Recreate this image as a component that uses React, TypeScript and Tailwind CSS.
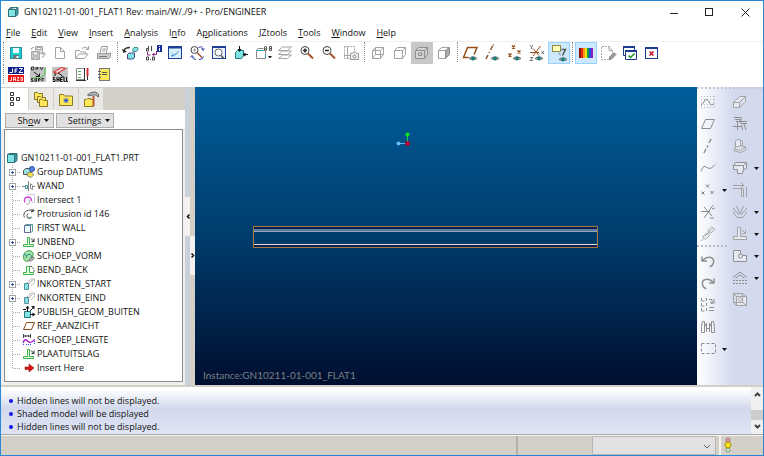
import type { ReactNode } from "react"

const GREY = "#a3a3a3"
const CYAN = "#7fe3e3"

type IconProps = { children: ReactNode; size?: number; stroke?: string }

function Icon({ children, size = 22, stroke = GREY }: IconProps) {
  return (
    <svg
      width={size}
      height={size}
      viewBox={`0 0 ${size} ${size}`}
      fill="none"
      stroke={stroke}
      strokeWidth="1"
      className="shrink-0"
      aria-hidden="true"
    >
      {children}
    </svg>
  )
}

function Eye() {
  return (
    <g>
      <path d="M9 16.500q4-3.500 8 0q-4 3-8 0z" fill="#d8e4e4" stroke="#666" />
      <circle cx="13" cy="16.500" r="1.800" fill="#0a7f7f" stroke="none" />
    </g>
  )
}

function Caret() {
  return (
    <svg width="5" height="3" viewBox="0 0 5 3" className="shrink-0" aria-hidden="true">
      <path d="M0 0h5L2.500 3z" fill="#111" />
    </svg>
  )
}

type Tool = { name: string; icon: ReactNode; active?: boolean; pressed?: boolean; menu?: boolean }

const fileTools: Tool[] = [
  {
    name: "Save",
    icon: (
      <Icon>
        <rect x="5.500" y="5.500" width="11" height="11" fill="#10d0d8" stroke="#2b8f98" />
        <path d="M8 6h6v5H8z" fill="#f4ffff" stroke="none" />
        <path d="M8 13h6v3.500H8z" fill="#777" stroke="none" />
        <path d="M11.500 14h2v2h-2z" fill="#fff" stroke="none" />
      </Icon>
    ),
  },
  {
    name: "Save a copy",
    icon: (
      <Icon stroke="#a8a8a8">
        <path d="M8.500 4.500h7v7h-7z" fill="#ddd" />
        <path d="M10 5.500h4v2h-4z" fill="#fff" />
        <path d="M4.500 9.500h8v8h-8z" fill="#c8c8c8" />
        <path d="M6.500 10v3h4v-3zM6.500 17v-2h4v2z" fill="#fff" />
        <path d="M15 15.500q3-1 2-4M15.500 12.500l1.500-2 1.500 2M4 7.500q0-2 3-2" stroke="#999" />
      </Icon>
    ),
  },
  {
    name: "New",
    icon: (
      <Icon>
        <path d="M6.500 5.500h5l4 4v7h-9zM11.500 5.500v4h4" fill="#fff" />
      </Icon>
    ),
  },
  {
    name: "Open",
    icon: (
      <Icon>
        <path d="M4.500 16.500v-8h4l1 1.500h5v2M4.500 16.500l3.500-4.500h9l-3.500 4.500zM11 6.500q3-3 6 0M17.500 4v3.500h-3" />
      </Icon>
    ),
  },
  {
    name: "Print",
    icon: (
      <Icon stroke="#999">
        <path d="M7 11l1.500-6.500h6L13.500 11M9.500 7h3.500M9 9h3.500" />
        <path d="M4.500 11.500h12l1-1v4l-1.500 2H4.500z" fill="#ccc" />
        <path d="M6 14.500h8" stroke="#777" />
      </Icon>
    ),
  },
]

const viewTools: Tool[] = [
  {
    name: "Regenerate",
    icon: (
      <Icon stroke="#333">
        <path d="M7.500 12.500l1.500-1.500h5.500v4.500l-1.500 1.500h-5.500z" fill={CYAN} stroke="#448" />
        <path d="M12.500 7.500l1.500-2h3.500l.5 2-1.500 2h-3.500z" fill={CYAN} stroke="#4a8a8a" />
        <path d="M4 8.500q1-3 6-3" strokeWidth="1.500" />
        <path d="M2 7l5 2.500-3.500 1.500z" fill="#222" stroke="none" />
      </Icon>
    ),
  },
  {
    name: "Switch dimensions",
    icon: (
      <Icon stroke="#444">
        <path d="M6.500 4v5M4.500 6.500h2v2.500h-2zM9.500 4v5" />
        <path d="M5.500 10v3h3M14.500 9v3.500h-4M12.500 11l-2 1.500 2 1.500" stroke="#a02090" />
        <path d="M4.500 15h2v3h-2zM10.500 15h2v3h-2z" />
        <path d="M8 17.500h1" />
        <rect x="15" y="3" width="5" height="7" fill="#12309c" stroke="none" />
        <path d="M17.500 4v1M17.500 6v3" stroke="#fff" />
      </Icon>
    ),
  },
  {
    name: "Repaint",
    icon: (
      <Icon>
        <rect x="4.500" y="4.500" width="13" height="12" fill="#d8efff" stroke="#1d3f94" />
        <path d="M4 5.500h14" stroke="#1d3f94" strokeWidth="2" />
        <path d="M8 15q5-2 8-7l-5 4-4 1z" fill="#4c9ed8" stroke="none" />
        <path d="M7 10l4 4" stroke="#9ecbe8" />
      </Icon>
    ),
  },
  {
    name: "Spin center",
    icon: (
      <Icon stroke="#444">
        <circle cx="8.500" cy="8" r="3.500" fill="#fff" />
        <path d="M8.500 6.500v3M7 8h3" stroke="#999" />
        <path d="M11 10.500l5 5" stroke="#a4532a" strokeWidth="1.500" />
        <path d="M12.500 5.500q4-2 4.500 2M10 17.500q-3 0-4-3M15.500 6.500l1.500 2 1.500-2" stroke="#2b3c9c" />
        <path d="M4.500 15.500l1.500-2 2 2M13 17.500q4 0 4.500-3" stroke="#2b3c9c" />
      </Icon>
    ),
  },
  {
    name: "Preview",
    icon: (
      <Icon>
        <rect x="4.500" y="4.500" width="13" height="12" fill="#eef2fb" stroke="#1d3f94" />
        <path d="M4 5h14" stroke="#1d3f94" strokeWidth="2" />
        <circle cx="10.500" cy="10.500" r="3.500" fill="#fff" stroke="#666" />
        <path d="M13 13.500l3 3" stroke="#555" strokeWidth="1.500" />
      </Icon>
    ),
  },
  {
    name: "Orient mode",
    icon: (
      <Icon stroke="#277">
        <path d="M5.500 10.500l2-2h6v5.500l-2 2.500h-6z" fill={CYAN} />
        <path d="M9.500 4v4M18 12.500h-5" stroke="#111" />
        <path d="M7.500 7h4l-2 3zM15.500 10.500v4l-3-2z" fill="#111" stroke="none" />
      </Icon>
    ),
  },
  {
    name: "Saved views",
    icon: (
      <Icon stroke="#888">
        <path d="M4.500 8.500h9v8h-9zM4.500 8.500l2-2h5" fill="#fff" />
        <path d="M4.500 8.500h7M13.500 12v4" stroke="#1bb0b8" />
        <path d="M12.500 8.500V5l1-1 1 1v3.500M12.500 7h2M17.500 8.500V4.500h2v4zM17.500 6.500h2" stroke="#555" />
        <path d="M16 14h4l-2 2.500z" fill="#111" stroke="none" />
      </Icon>
    ),
  },
  {
    name: "Layers",
    icon: (
      <Icon>
        <path d="M4.500 16.500l4-3.500h9l-4 3.500z" fill="#fff" />
        <path d="M4.500 12.500l4-3.500h9l-4 3.500z" fill="#fff" />
        <path d="M4.500 8.500l4-3.500h9l-4 3.500z" fill="#fff" />
      </Icon>
    ),
  },
  {
    name: "Zoom in",
    icon: (
      <Icon stroke="#444">
        <circle cx="9" cy="8.500" r="4" fill="#fff" />
        <path d="M9 6.500v4M7 8.500h4" stroke="#222" strokeWidth="1.500" />
        <path d="M12 11.500l5 5" stroke="#a4532a" strokeWidth="2" />
      </Icon>
    ),
  },
  {
    name: "Zoom out",
    icon: (
      <Icon stroke="#444">
        <circle cx="9" cy="8.500" r="4" fill="#fff" />
        <path d="M7 8.500h4" stroke="#222" strokeWidth="1.500" />
        <path d="M12 11.500l5 5" stroke="#a4532a" strokeWidth="2" />
      </Icon>
    ),
  },
  {
    name: "Refit",
    icon: (
      <Icon>
        <path d="M4.500 4.500h10v12h-10z" fill="#fff" strokeDasharray="2 1" />
        <path d="M7.500 4.500v12M4 13.500h10" />
        <path d="M10.500 11.500h2l1-1.500h2l1 1.500h2v6h-8z" fill="#f2f2f2" stroke="#999" />
        <circle cx="14.500" cy="14.500" r="1.500" stroke="#888" />
      </Icon>
    ),
  },
]

const displayTools: Tool[] = [
  {
    name: "Wireframe",
    icon: (
      <Icon>
        <path d="M5.500 8.500h8v8h-8zM5.500 8.500l3-3h8l-3 3M16.500 5.500v7l-3 4M8.500 5.500v7h8M8.500 12.500l-3 4" />
      </Icon>
    ),
  },
  {
    name: "Hidden line",
    icon: (
      <Icon>
        <path d="M5.500 8.500h8v8h-8zM5.500 8.500l3-3h8l-3 3M16.500 5.500v7l-3 4" fill="#fff" />
      </Icon>
    ),
  },
  {
    name: "No hidden",
    pressed: true,
    icon: (
      <Icon stroke="#8e8e8e">
        <path d="M4.500 8.500h9v8h-9zM4.500 8.500l3-3h9l-3 3M16.500 5.500v7l-3 4" fill="#d4d4d4" />
        <path d="M7.500 13.500v-2.500h3.500v2.500z" />
      </Icon>
    ),
  },
  {
    name: "Shading",
    icon: (
      <Icon>
        <path d="M5.500 8.500h7v8h-7z" fill="#fff" />
        <path d="M5.500 8.500l3-3h8l-4 3z" fill="#fff" />
        <path d="M16.500 5.500v7l-4 4v-8z" fill="#aaa" stroke="#8e8e8e" />
      </Icon>
    ),
  },
]

const datumTools: Tool[] = [
  {
    name: "Datum planes",
    icon: (
      <Icon>
        <path d="M8.500 15.500H3.500l4-10h9.500l-3 7" stroke="#96501e" strokeWidth="1.500" />
        <Eye />
      </Icon>
    ),
  },
  {
    name: "Datum axes",
    icon: (
      <Icon>
        <path d="M4 17l2-4M7 11l.5-1M8.500 8l2-4M11 3.500l.5-1" stroke="#96501e" strokeWidth="1.500" />
        <Eye />
      </Icon>
    ),
  },
  {
    name: "Datum points",
    icon: (
      <Icon>
        <path d="M8 3.500l3 3m0-3l-3 3M4.500 11.500l3 3m0-3l-3 3M13.500 8.500l3 3m0-3l-3 3" stroke="#96501e" strokeWidth="1.500" />
        <Eye />
      </Icon>
    ),
  },
  {
    name: "Coordinate systems",
    icon: (
      <Icon stroke="#777">
        <path d="M4 3l1.500 2L7 3M5.500 5v2M4 15.500h3l-3 3h3M15.500 9l2.500 3m0-3l-2.500 3" />
        <path d="M4 10.500h9M14.500 4L7 14M7 6.500l6 7" stroke="#96501e" />
        <Eye />
      </Icon>
    ),
  },
  {
    name: "Annotations",
    active: true,
    icon: (
      <Icon>
        <rect x="4.500" y="3.500" width="8" height="6" fill="#ffffb8" stroke="#8f8a40" />
        <path d="M13.500 7.500h4l-3 6" stroke="#555" strokeWidth="1.500" />
        <path d="M10 11.500h2v2" stroke="#999" />
        <g transform="translate(2 1)">
          <Eye />
        </g>
      </Icon>
    ),
  },
]

const windowTools: Tool[] = [
  {
    name: "Colors",
    active: true,
    icon: (
      <Icon>
        <g stroke="none">
          <path d="M4 6h2v10H4z" fill="#8a1408" />
          <path d="M6 6h2v10H6z" fill="#e02a10" />
          <path d="M8 6h2v10H8z" fill="#f59a12" />
          <path d="M10 6h2v10h-2z" fill="#f2e51c" />
          <path d="M12 6h2v10h-2z" fill="#18a038" />
          <path d="M14 6h2v10h-2z" fill="#1c50e0" />
          <path d="M16 6h2v10h-2z" fill="#9020c0" />
        </g>
      </Icon>
    ),
  },
  {
    name: "Clear sketch",
    icon: (
      <Icon>
        <path d="M12 17.500H4.500v-13h8l3 4v3" fill="#fff" strokeDasharray="2 1" />
        <path d="M12 4.500v4h3.500" />
        <path d="M12.500 15l4.500-4.500 2 2-5 5h-1.500z" fill="#999" stroke="#8a8a8a" />
      </Icon>
    ),
  },
  {
    name: "Activate window",
    icon: (
      <Icon stroke="#1c3a90">
        <path d="M4.500 4.500h11v9h-11z" fill="#fff" />
        <path d="M4 5h12" strokeWidth="2" />
        <path d="M6.500 8.500h11v9h-11z" fill="#fff" />
        <path d="M6 9h12" strokeWidth="2" />
        <path d="M9.500 13.500l2 2 4-4" stroke="#189018" strokeWidth="1.500" />
      </Icon>
    ),
  },
  {
    name: "Close window",
    icon: (
      <Icon stroke="#1c3a90">
        <rect x="4.500" y="5.500" width="12" height="11" fill="#fff" />
        <path d="M4 6h13" strokeWidth="2" />
        <path d="M8.500 9.500l4 4m0-4l-4 4" stroke="#c01020" strokeWidth="1.500" />
      </Icon>
    ),
  },
]

const customTools: Tool[] = [
  {
    name: "Jazo",
    icon: (
      <Icon>
        <path d="M3 3h16v7H3z" fill="#12208c" stroke="none" />
        <path d="M3 11h16v7H3z" fill="#f01414" stroke="none" />
        <path d="M4.500 8.500h3V4.500M10 9V5h2.500M10 7h2M14 4.500h3.500l-3.500 4h4" stroke="#fff" />
        <path d="M4.500 16.500h2V13M8.500 17v-3.500h2V17M8.500 15.500h2M12 13.500h2l-2 3h2.500M16 13.500h1.500v3H16z" stroke="#ffd4d4" />
      </Icon>
    ),
  },
  {
    name: "Driven surface",
    icon: (
      <Icon stroke="#333">
        <path d="M3 3h16v15H3z" fill="#c4c4c4" stroke="none" />
        <path d="M4.500 3v3h2l.5-3zM9 6V3.500h2v1.500H9.500M13 3l1.500 3L16 3" />
        <path d="M7 8l5 4M12.500 9.500V12.500H9" stroke="#111" />
        <path d="M18 4v6l-4 4H6" stroke="#38c838" />
        <path d="M6 14.500H4.500v1.500H6v1.500H4M8 14v3.500h1.500V14M11.500 17.500v-3H13v1.500h-1M15 17.500v-3h2M15 16h1.500" />
      </Icon>
    ),
  },
  {
    name: "Shell",
    icon: (
      <Icon stroke="#333">
        <path d="M3 3h16v15H3z" fill="#c4c4c4" stroke="none" />
        <path d="M4.500 8l8-4.500 4 1-8 5z" fill="#ecc" stroke="#e02020" />
        <path d="M6 9v3M9 8.500l6 5" stroke="#111" />
        <path d="M6 13.500H4.500v2H6v2H4M8 13v4.500M10 13v4.500M8 15.500h2M13.500 13.500h-2v4h2M11.500 15.500h2M15 13v4.500h1.500M17.500 13v4.500H19" stroke="#111" />
      </Icon>
    ),
  },
  {
    name: "Notebook pen",
    icon: (
      <Icon stroke="#888">
        <path d="M5.500 4.500h8v11h-8z" fill="#fff" />
        <path d="M5 16.500h10M13.500 4v12" stroke="#333" />
        <path d="M7 7.500h3M7 10.500h3M7 13.500h3" stroke="#5fae5f" />
        <path d="M16.500 4v8" stroke="#d03030" strokeWidth="2" />
        <path d="M16.500 12v4" stroke="#333" />
      </Icon>
    ),
  },
  {
    name: "Catalog",
    icon: (
      <Icon stroke="#777">
        <rect x="6.500" y="4.500" width="10" height="12" fill="#f7e85a" />
        <path d="M9 8.500h5M9 10.500h5" stroke="#555" />
        <path d="M5 7.500h3M5 10.500h3M5 13.500h3" stroke="#666" />
      </Icon>
    ),
  },
]

const sketchTools: Tool[] = [
  {
    name: "Sketch",
    icon: (
      <Icon>
        <path d="M4 5.500h14M4 8.500h14M4 13.500h14M4 16.500h14M4.500 5v12M17.500 5v12" stroke="#bbb" strokeDasharray="1 2" />
        <path d="M4 13.500l2-1q2-5 4-4t3 4 4 0" stroke="#8c8c8c" />
      </Icon>
    ),
  },
  { name: "Plane", icon: <Icon stroke="#8c8c8c"><path d="M4.500 15.500l4-9h9l-4 9z" /></Icon> },
  { name: "Axis", icon: <Icon stroke="#8c8c8c"><path d="M7 18l2-4M10 12.500l1-2M12 8l2-4" strokeWidth="1.500" /></Icon> },
  { name: "Curve", icon: <Icon stroke="#8c8c8c"><path d="M4 14.500q2-6 4-5t4 2 6-4" /></Icon> },
  {
    name: "Point",
    menu: true,
    icon: (
      <Icon stroke="#808080">
        <path d="M9 5.500l3 3m0-3l-3 3M4.500 12.500l3 3m0-3l-3 3M13.500 12l3 3m0-3l-3 3" />
      </Icon>
    ),
  },
  { name: "Csys", icon: <Icon stroke="#8c8c8c"><path d="M4 10.500h9M16 4L7 17M7 6l8 9M15 8l3-1M13 17h4" /></Icon> },
  {
    name: "Reference",
    icon: (
      <Icon>
        <path d="M5.500 14l4-4 3 2-4 4.500zM10.500 8l4-4 3 2-4 4.500zM7.500 13.500l7-7M4 18l2.500-2.500" />
      </Icon>
    ),
  },
]

const editTools: Tool[] = [
  { name: "Undo", icon: <Icon stroke="#909090"><path d="M5 6.500v4.500h5M5.500 10.500q4-4 8-3t3 5-4 4" strokeWidth="1.500" /></Icon> },
  { name: "Redo", icon: <Icon stroke="#909090"><path d="M17 6.500v4.500h-5M16.500 10.500q-4-4-8-3t-3 5 4 4" strokeWidth="1.500" /></Icon> },
  {
    name: "Regenerate all",
    icon: (
      <Icon stroke="#909090">
        <path d="M4.500 4v3h3M4.500 9v3h3M4.500 14v3h3M9.500 4v3M9.500 9v3M9.500 14v3M12 5.500h3v4M13 8l2 2 2-2M18 9h-1V5M12 13.500h5M12 16.500h5" />
      </Icon>
    ),
  },
  {
    name: "Find",
    icon: (
      <Icon stroke="#909090">
        <path d="M4.500 16.500v-6l1-5h2v11zM14.500 16.500v-11h2l1 5v6zM7.500 11l2-4v9M14.500 11l-2-4v9M9.500 12.500h3" />
      </Icon>
    ),
  },
  {
    name: "Select box",
    menu: true,
    icon: <Icon stroke="#8c8c8c"><rect x="4.500" y="5.500" width="14" height="10" strokeDasharray="3 2" /></Icon>,
  },
]

const featureTools: Tool[] = [
  { name: "Extrude", icon: <Icon><path d="M4.500 11.500h6v5h-6zM4.500 11.500l6-6h6l-6 6M16.500 5.500v5l-6 6" fill="#e6e9f4" /></Icon> },
  {
    name: "Flat wall",
    icon: (
      <Icon stroke="#909090">
        <path d="M5 4.500h7v4h6M6 6.500h5l1 4h6M4 13.500h8M8.500 9v8M7 8.500h4M15 11l2 6M12.500 12l1 5" />
      </Icon>
    ),
  },
  {
    name: "Flange wall",
    icon: (
      <Icon>
        <path d="M6.500 12V6q2-3 5-1v6l5 1v3l-5 2.500-6-1.500v-2zM6.500 12l5-1M11.500 5l2 1v5M5.500 14l6 1.500 5-3.500" fill="#e6e9f4" />
      </Icon>
    ),
  },
  {
    name: "Unattached flat wall",
    menu: true,
    icon: <Icon stroke="#909090"><path d="M4.500 8.500l2-3h11v6l-3 1-1 4h-5v-4h-4zM4.500 8.500h10v4M14.500 8.500l3-3" fill="#e6e9f4" /></Icon>,
  },
  { name: "Extend", icon: <Icon><path d="M4 6.500h10M4 9.500h10M12 4l3 2.500-3 2.500M12.500 10v8M14.500 10v8M17.500 8v10" /></Icon> },
  {
    name: "Bend",
    menu: true,
    icon: <Icon stroke="#a0a0a0"><path d="M4 7l6 7M18 7l-6 7M7.500 5l3.500 8 3.500-8M4 11l4 5.500h6l4-5.500" /></Icon>,
  },
  {
    name: "Unbend",
    menu: true,
    icon: <Icon><path d="M4.500 13.500h4v-9h3v9h6v3h-13zM13 7l3 3M16.500 7v3.500H13" fill="#e6e9f4" /></Icon>,
  },
  {
    name: "Notch",
    menu: true,
    icon: (
      <Icon stroke="#909090">
        <path d="M4.500 5.500h7v5h6v6h-13z" fill="#e6e9f4" />
        <circle cx="11.500" cy="11" r="2" fill="#e6e9f4" />
      </Icon>
    ),
  },
  {
    name: "Form",
    menu: true,
    icon: (
      <Icon stroke="#909090">
        <path d="M4 10.500l7-5.500 7 5.500M6.500 11.500l4.500-3.500 4.500 3.500" />
        <path d="M4 13.500h14M4 16.500h14" strokeDasharray="2 1" />
      </Icon>
    ),
  },
  {
    name: "Flat pattern",
    icon: (
      <Icon>
        <path d="M7.500 7.500h10v9h-10z" fill="#e6e9f4" />
        <path d="M4.500 4.500h9v9h-9zM4.500 4.500l3 3M13.500 4.500l4 3M4.500 13.500l3 3M13.500 13.500l4 3M9 10.500l2-2 2 2-2 2z" />
      </Icon>
    ),
  },
]

function ToolButton({ tool }: { tool: Tool }) {
  const state = tool.active
    ? "bg-[#cce8ff] outline outline-1 -outline-offset-1 outline-[#99d1ff]"
    : tool.pressed
      ? "bg-[#c8c8c8]"
      : ""
  return (
    <button type="button" aria-label={tool.name} className={`h-[22px] w-[22px] shrink-0 ${state}`}>
      {tool.icon}
    </button>
  )
}

function Grip({ narrow = false }: { narrow?: boolean }) {
  return (
    <span className={`flex shrink-0 justify-center ${narrow ? "w-1" : "w-[5px]"}`}>
      <span className="h-5 border-l border-dotted border-[#888]"></span>
    </span>
  )
}

function ToolColumn({ tools }: { tools: Tool[] }) {
  return (
    <div className="flex flex-col">
      {tools.map((tool) => (
        <div key={tool.name} className="flex items-center gap-[3px]">
          <ToolButton tool={tool} />
          {tool.menu && <Caret />}
        </div>
      ))}
    </div>
  )
}

const menus = [
  ["", "F", "ile"],
  ["", "E", "dit"],
  ["", "V", "iew"],
  ["", "I", "nsert"],
  ["", "A", "nalysis"],
  ["I", "n", "fo"],
  ["A", "p", "plications"],
  ["JZtools", "", ""],
  ["", "T", "ools"],
  ["", "W", "indow"],
  ["", "H", "elp"],
]

const unbendIcon = (
  <Icon size={14} stroke="#3fae4c">
    <path d="M1.500 9.500h4v-7h2v7h4v2h-10z" fill="#e4fbe4" />
    <path d="M9 3.500l3 3M12 3.500v3H9.500" stroke="#333" />
  </Icon>
)

const cutIcon = (
  <Icon size={14} stroke="#999">
    <path d="M5 6l4-4h3.500v3.500L8.500 9" strokeDasharray="2 1" />
    <path d="M2.500 6.500h4v6h-4z" fill={CYAN} stroke="#5a8fa0" />
    <path d="M6.500 7l4-4" />
  </Icon>
)

const features: { label: string; expandable?: boolean; icon: ReactNode }[] = [
  {
    label: "Group DATUMS",
    expandable: true,
    icon: (
      <Icon size={14} stroke="#555">
        <path d="M1.500 5.500l2-2h5v4l-2 2h-5z" fill="#9adfe0" />
        <circle cx="10" cy="4" r="2.500" fill="#5a88e8" stroke="#2a489a" />
        <path d="M6 7.500h4l1.500 2.500-2.500 2.500-4-2z" fill="#f0e04a" stroke="#887" />
      </Icon>
    ),
  },
  {
    label: "WAND",
    expandable: true,
    icon: (
      <Icon size={14} stroke="#888">
        <path d="M0 7.500h3M6.500 2v10M8.500 4.500v5l2 1v-4zM11 7.500h2" />
        <path d="M3.500 6.500h2v3h-2z" stroke="#2a8f8f" />
      </Icon>
    ),
  },
  {
    label: "Intersect 1",
    icon: (
      <Icon size={14} stroke="#999">
        <path d="M5.500 1.500h7v8h-3" stroke="#cfc4e8" />
        <path d="M3 9.500q-2-4.500 2.500-5.500 4 0 4 4" stroke="#d24cd2" strokeWidth="1.500" />
        <path d="M4 11q4 1 4-3L6 6.500" stroke="#aaa" />
      </Icon>
    ),
  },
  {
    label: "Protrusion id 146",
    icon: (
      <Icon size={14} stroke="#555">
        <path d="M12 3q-7-.5-9.500 2.500-1.500 3 0 5M6 6.500q-2 2-.5 4.500l3 .5" />
        <path d="M12 3q-1 1.500-3 1.500" strokeWidth="2" />
        <path d="M7 11l3-1" stroke="#2a8f8f" />
      </Icon>
    ),
  },
  {
    label: "FIRST WALL",
    icon: (
      <Icon size={14} stroke="#669">
        <path d="M2.500 4.500h6v7h-6z" fill="#eaffff" />
        <path d="M2.500 4.500l1.500-1h6.500v7l-2 1M8.500 4.500l2-1" stroke="#5aa0a0" />
      </Icon>
    ),
  },
  { label: "UNBEND", expandable: true, icon: unbendIcon },
  {
    label: "SCHOEP_VORM",
    icon: (
      <Icon size={14} stroke="#3a9e48">
        <path d="M1.500 7.500q0-5 5.500-6 5 1 4 5l-2 4.500-4.500 1.500q-3.500-1-3-5z" fill="#a6e4ac" />
        <path d="M4 9q0-4 4-4 2 1 1 4M2 5l3 2" stroke="#2a8a80" />
        <path d="M7 10l5-2v2l-4 2.500z" fill="#bbb" stroke="#888" />
      </Icon>
    ),
  },
  {
    label: "BEND_BACK",
    icon: (
      <Icon size={14} stroke="#3fae4c">
        <path d="M1.500 9.500h3v-6h3v6h4v2h-10z" fill="#e4fbe4" />
        <path d="M8 3.500h2l2 3v3" stroke="#555" strokeDasharray="2 1" />
      </Icon>
    ),
  },
  { label: "INKORTEN_START", expandable: true, icon: cutIcon },
  { label: "INKORTEN_EIND", expandable: true, icon: cutIcon },
  {
    label: "PUBLISH_GEOM_BUITEN",
    icon: (
      <Icon size={14} stroke="#111">
        <path d="M2.500 6.500h6v6h-6z" fill={CYAN} stroke="#277" />
        <path d="M5.500 7V2M8 6l3.500-3.500M8 9.500h4M1 4.500h3" />
        <path d="M3.500 3.500l2-3 2 3zM9 1h3.500v3.500zM10.500 7.500l3 2-3 2z" fill="#111" stroke="none" />
      </Icon>
    ),
  },
  {
    label: "REF_AANZICHT",
    icon: (
      <Icon size={14} stroke="#8f4a1c">
        <path d="M1.500 10.500l3-7h8l-3 7z" />
      </Icon>
    ),
  },
  {
    label: "SCHOEP_LENGTE",
    icon: (
      <Icon size={14} stroke="#444">
        <path d="M1.500 1v4M8.500 1v4M2 3h6M3.500 2v2M6.500 2v2" />
        <path d="M1 9.500q2-4 4-2t3 2 5-3" stroke="#b020d0" strokeWidth="1.500" />
        <path d="M1.500 9v3M12.500 8v4M4 11.500h6" stroke="#2a58d8" strokeDasharray="1 1" />
      </Icon>
    ),
  },
  { label: "PLAATUITSLAG", icon: unbendIcon },
  {
    label: "Insert Here",
    icon: (
      <Icon size={14}>
        <path d="M3 6h4V3l5 4-5 4V8.500H3z" fill="#e01010" stroke="#7a0808" strokeWidth="0.500" />
      </Icon>
    ),
  },
]

function Branch({ expandable, last }: { expandable?: boolean; last: boolean }) {
  return (
    <svg width="16" height="14" viewBox="0 0 16 14" fill="none" className="shrink-0" aria-hidden="true">
      <path d={last ? "M6.500 0v7" : "M6.500 0v14"} stroke="#a8a8a8" strokeDasharray="1 1" />
      <path d="M7 7.500h8" stroke="#a8a8a8" strokeDasharray="1 1" />
      {expandable && (
        <g>
          <rect x="3.500" y="4.500" width="6" height="6" fill="#fff" stroke="#a4a4a4" />
          <path d="M5 7.500h3M6.500 6v3" stroke="#3a50a0" />
        </g>
      )}
    </svg>
  )
}

const tabs: { name: string; icon: ReactNode }[] = [
  {
    name: "Model tree",
    icon: (
      <Icon size={20} stroke="#333">
        <path d="M5.500 3.500h3v3h-3zM5.500 8.500h3v3h-3zM5.500 13.500h3v3h-3zM11.500 8.500h3v3h-3z" />
      </Icon>
    ),
  },
  {
    name: "Folder browser",
    icon: (
      <Icon size={20} stroke="#8a7a28">
        <path d="M3.500 3.500h3l1 1h4v6h-8z" fill="#ffe95a" />
        <path d="M6.500 7.500h3l1 1h4v5h-8z" fill="#ffe95a" />
        <path d="M8.500 10.500h3l1 1h4v6h-8z" fill="#ffe95a" />
      </Icon>
    ),
  },
  {
    name: "Favorites",
    icon: (
      <Icon size={20} stroke="#8a7a28">
        <path d="M3.500 5.500h4l1 1.500h8v9.500h-13z" fill="#ffe95a" />
        <path d="M10 9v5M7.500 11.500h5M8 9.500l4 4m0-4l-4 4" stroke="#2c50d0" />
      </Icon>
    ),
  },
  {
    name: "Connections",
    icon: (
      <Icon size={20} stroke="#666">
        <path d="M3.500 10.500h2l1-1h3v1h3v7h-9z" fill="#ffe95a" stroke="#8a7a28" />
        <path d="M12.500 7v10" stroke="#b05a30" strokeWidth="2" />
        <path d="M6.500 6q3-3.500 8-3l3 2v3l-3-2h-3q-3 1.500-5 0z" fill="#aebcbc" />
      </Icon>
    ),
  },
]

const messages = [
  "Hidden lines will not be displayed.",
  "Shaded model will be displayed",
  "Hidden lines will not be displayed.",
]

function TitleBar() {
  return (
    <header className="flex h-[22px] items-center justify-between pl-[6px]">
      <h1 className="flex items-center gap-[5px] text-[9px]">
        <Icon size={12} stroke="#2f7076">
          <path d="M1.500 3.500h7v7h-7z" fill={CYAN} />
          <path d="M1.500 3.500l2-2h7.500v7l-2.500 2v-7l2.500-2" fill="#3f9aa0" />
        </Icon>
        GN10211-01-001_FLAT1 Rev: main/W/./9+ - Pro/ENGINEER
      </h1>
      <div className="flex">
        <button type="button" aria-label="Minimize" className="flex w-9 justify-center">
          <svg width="9" height="9" stroke="#222" aria-hidden="true"><path d="M1 5.500h8" /></svg>
        </button>
        <button type="button" aria-label="Maximize" className="flex w-9 justify-center">
          <svg width="9" height="9" stroke="#222" fill="none" aria-hidden="true"><rect x="0.500" y="0.500" width="7" height="7" /></svg>
        </button>
        <button type="button" aria-label="Close" className="flex w-9 justify-center">
          <svg width="9" height="9" stroke="#222" aria-hidden="true"><path d="M0.500 0.500l8 8m0-8l-8 8" /></svg>
        </button>
      </div>
    </header>
  )
}

function ModelPanel() {
  return (
    <aside className="flex w-[184px] shrink-0 flex-col bg-[#f0efed] pb-[3px]">
      <div role="tablist" className="flex h-[23px] shrink-0 gap-px bg-[#d4d0c8] pt-px">
        {tabs.map((tab, index) => (
          <button
            key={tab.name}
            type="button"
            role="tab"
            aria-label={tab.name}
            aria-selected={index === 0}
            className={`flex items-center justify-center ${index === 0 ? "w-[27px] bg-white" : "w-6 bg-[#eae8e4]"}`}
          >
            {tab.icon}
          </button>
        ))}
      </div>
      <div className="flex h-[19px] shrink-0 items-end gap-[2px] bg-white pb-px pl-1 text-[9px] leading-3">
        <button type="button" className="flex h-[15px] w-[49px] items-center justify-center gap-1 border border-[#adadad] bg-[#e1e1e1] pl-2">
          <span>Sh<u>o</u>w</span>
          <Caret />
        </button>
        <button type="button" className="flex h-[15px] w-[58px] items-center justify-center gap-1 border border-[#adadad] bg-[#e1e1e1] pl-2">
          <span>Settin<u>g</u>s</span>
          <Caret />
        </button>
      </div>
      <div className="ml-[3px] mr-[2px] flex-1 border border-[#8c8c8c] bg-white pt-[21px] text-[9px] leading-[14px]">
        <div className="flex items-center gap-px whitespace-nowrap pl-px">
          <Icon size={14} stroke="#2f7076">
            <path d="M1.500 3.500h7v8h-7z" fill={CYAN} />
            <path d="M1.500 3.500l2-1h7.500v7l-2.500 2v-8l2.500-1" fill="#3f9aa0" />
          </Icon>
          GN10211-01-001_FLAT1.PRT
        </div>
        <ul>
          {features.map((feature, index) => (
            <li key={feature.label} className="flex items-center whitespace-nowrap pl-px">
              <Branch expandable={feature.expandable} last={index === features.length - 1} />
              {feature.icon}
              <span className="pl-px">{feature.label}</span>
            </li>
          ))}
        </ul>
      </div>
    </aside>
  )
}

function Splitter() {
  return (
    <div className="flex w-[10px] shrink-0 bg-[#d4d0c8]">
      <div className="flex w-[5px] flex-col bg-[#c9d0da]">
        <div className="flex flex-1 flex-col justify-end">
          <button type="button" aria-label="Collapse tree" className="flex h-[39px] items-center justify-center bg-[#f3f2f0]">
            <svg width="4" height="5" fill="none" stroke="#111" strokeWidth="1.500" aria-hidden="true"><path d="M3.500 0.500l-2 2 2 2" /></svg>
          </button>
        </div>
        <div className="flex-1"></div>
      </div>
      <div className="flex w-[5px] flex-col">
        <div className="flex-1"></div>
        <div className="flex-1">
          <button type="button" aria-label="Expand browser" className="flex h-[39px] w-full items-center justify-center bg-[#f3f2f0]">
            <svg width="4" height="5" fill="none" stroke="#111" strokeWidth="1.500" aria-hidden="true"><path d="M0.500 0.500l2 2-2 2" /></svg>
          </button>
        </div>
      </div>
    </div>
  )
}

function Viewport() {
  return (
    <main className="relative min-w-0 flex-1 bg-linear-to-b from-[#005e9b] via-[#003d6d] to-[#000f30]">
      <svg viewBox="0 0 502 298" className="block h-full w-full" fill="none" aria-label="Sheet metal part">
        {/* orientation triad */}
        <path d="M204 56.500h8" stroke="#58b4f0" />
        <path d="M212.500 49v7" stroke="#20d040" />
        <circle cx="203.500" cy="56.500" r="2" fill="#66bcff" />
        <circle cx="212.500" cy="47.500" r="2" fill="#08e820" />
        <circle cx="212.500" cy="56.500" r="2.500" fill="#a80834" />
        {/* plate edges */}
        <path d="M58 141.500h344M58 159h344" stroke="#0a1c58" strokeWidth="3" />
        <path d="M58.500 139.500h344v21h-344z" stroke="#a87a3c" />
        <path d="M59 143h343" stroke="#5f7c9c" strokeWidth="2" />
        <path d="M59 144.500h343" stroke="#93a7ba" />
        <path d="M59 157.500h343" stroke="#e6ddd2" />
      </svg>
      <p className="absolute bottom-1 left-2 font-['Lato',sans-serif] text-[10px] leading-3 text-[#7a7f86]">
        Instance:GN10211-01-001_FLAT1
      </p>
    </main>
  )
}

function MessageLog() {
  return (
    <section className="flex h-[48px] shrink-0 border-b border-[#aaa] bg-linear-to-b from-white from-5% via-[#d3d9ec] via-45% to-[#dfe4f4]">
      <ul className="flex flex-1 flex-col justify-end pb-px pl-2 text-[9px] leading-[13px]">
        {messages.map((message, index) => (
          <li key={index} className="flex items-center gap-1">
            <span className="h-1 w-1 rounded-full bg-[#1414e8]"></span>
            {message}
          </li>
        ))}
      </ul>
      <div className="flex w-3 flex-col items-center justify-between bg-[#f0f0f0] py-[5px]">
        <svg width="7" height="5" fill="none" stroke="#444" strokeWidth="2" aria-hidden="true"><path d="M1 4l2.500-2.500L6 4" /></svg>
        <div className="flex w-full flex-1 flex-col justify-end pb-1">
          <div className="h-[10px] bg-[#cdcdcd]"></div>
        </div>
        <svg width="7" height="5" fill="none" stroke="#444" strokeWidth="2" aria-hidden="true"><path d="M1 1l2.500 2.500L6 1" /></svg>
      </div>
    </section>
  )
}

function StatusBar() {
  return (
    <footer className="flex h-5 shrink-0 justify-end border-t border-[#f4f3f0] bg-[#d4d0c8] text-[9px]">
      <div className="flex w-[203px] justify-end border-l-2 border-[#b4b2ac] px-[3px]">
        <div className="relative flex w-[124px]">
          <select aria-label="Selection filter" className="w-full appearance-none border border-[#b4b4b4] bg-[#e1e1e1]">
            <option></option>
          </select>
          <svg width="8" height="5" fill="none" stroke="#666" className="pointer-events-none absolute right-[5px] top-2" aria-hidden="true">
            <path d="M1 1l3 3 3-3" />
          </svg>
        </div>
      </div>
      <div className="w-[44px] border-l-2 border-[#f4f3f0] pl-[2px]">
        <svg width="10" height="18" viewBox="0 0 10 18" aria-hidden="true">
          <circle cx="5" cy="4" r="2" fill="#e0a8a8" stroke="#b06060" />
          <circle cx="5" cy="14" r="2" fill="#d8ecd0" stroke="#70a070" />
          <circle cx="5" cy="9" r="3" fill="#f8e020" stroke="#a89010" />
        </svg>
      </div>
    </footer>
  )
}

export default function App() {
  return (
    <div className="flex min-h-screen flex-col border border-[#2b88d8] bg-white font-['Open_Sans',sans-serif] text-[#111]">
      <TitleBar />
      <nav className="flex h-[19px] items-center gap-[11px] border-b border-[#f0f0f0] pl-[5px] pt-px text-[9px]">
        {menus.map(([before, key, after]) => (
          <button key={before + key + after} type="button">
            {before}
            <u>{key}</u>
            {after}
          </button>
        ))}
      </nav>
      <div className="flex">
        <Grip narrow />
        {fileTools.map((tool) => <ToolButton key={tool.name} tool={tool} />)}
        <Grip />
        {viewTools.map((tool) => <ToolButton key={tool.name} tool={tool} />)}
        <Grip />
        {displayTools.map((tool) => <ToolButton key={tool.name} tool={tool} />)}
        <Grip />
        {datumTools.map((tool) => <ToolButton key={tool.name} tool={tool} />)}
        <Grip />
        {windowTools.map((tool) => <ToolButton key={tool.name} tool={tool} />)}
      </div>
      <div className="flex pb-px">
        <Grip narrow />
        {customTools.map((tool) => <ToolButton key={tool.name} tool={tool} />)}
      </div>
      <div className="flex flex-1">
        <ModelPanel />
        <Splitter />
        <Viewport />
        <div className="flex w-[66px] shrink-0 justify-between border-t-2 border-dotted border-[#c4c8d4] bg-linear-to-r from-white to-[#d3daee] to-55% pr-px pt-[2px]">
          <div className="flex flex-col">
            <ToolColumn tools={sketchTools} />
            <div className="mb-[3px] w-[30px] border-t-2 border-dotted border-[#b8bcc8]"></div>
            <ToolColumn tools={editTools} />
          </div>
          <div className="w-[33px]">
            <ToolColumn tools={featureTools} />
          </div>
        </div>
      </div>
      <div className="h-[2px] shrink-0 bg-[#d4d0c8]"></div>
      <MessageLog />
      <StatusBar />
    </div>
  )
}
